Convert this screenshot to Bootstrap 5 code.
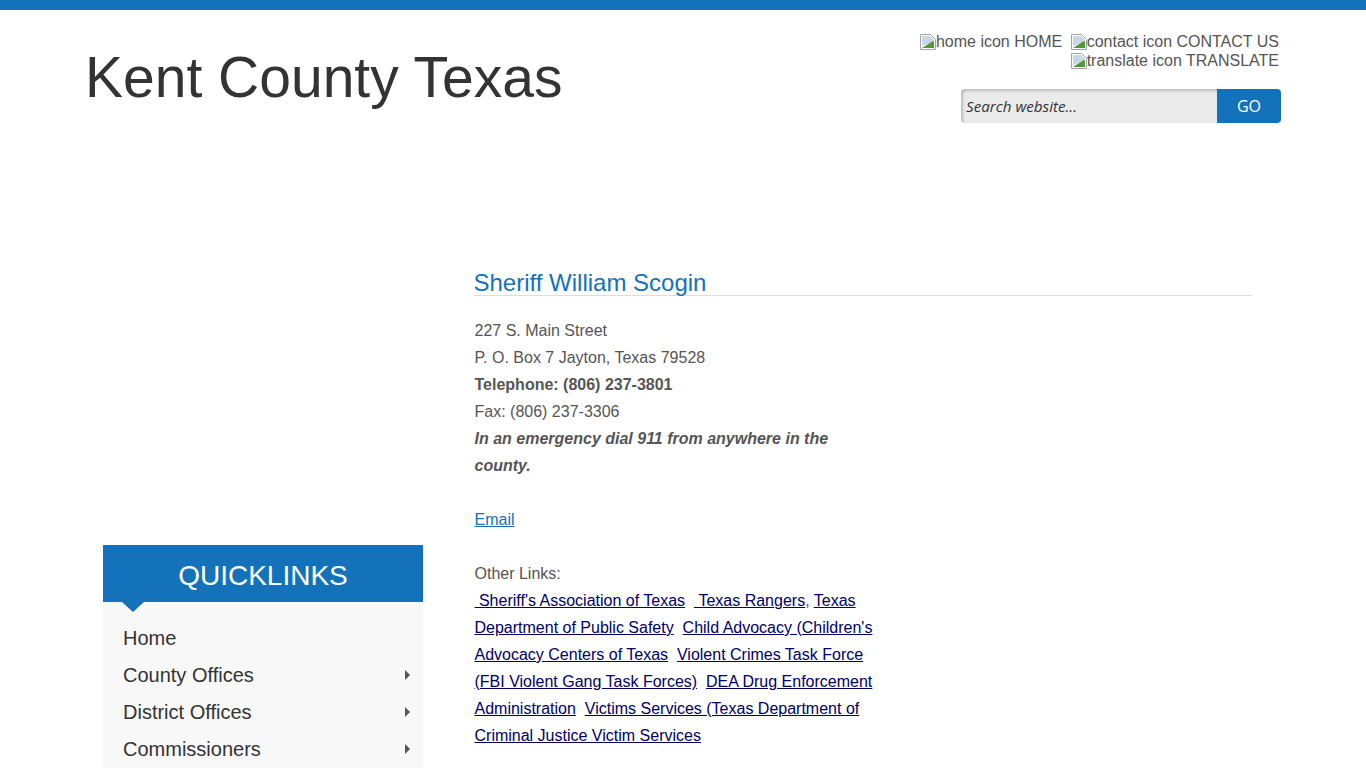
<!DOCTYPE html>
<html lang="en">
  <head>
    <meta charset="UTF-8" />
    <meta name="viewport" content="width=device-width, initial-scale=1.0" />
    <title>Kent County Texas</title>
    <link
      href="https://cdn.jsdelivr.net/npm/bootstrap@5.3.2/dist/css/bootstrap.min.css"
      rel="stylesheet"
    />
    <style>
      body {
        font-family: "Liberation Sans", Arial, sans-serif;
        font-size: 16px;
        color: #555;
        border-top: 10px solid #1472bb;
      }
      .site-head {
        height: 235px;
        padding: 0 85px;
      }
      .site-title {
        font-family: "Liberation Sans", Arial, sans-serif;
        font-size: 57px;
        line-height: 66px;
        font-weight: 400;
        color: #333;
        margin: 34px 0 0;
      }
      .head-right {
        width: 420px;
        padding-top: 22px;
      }
      .top-links {
        line-height: 19px;
        text-align: right;
        padding-right: 2px;
      }
      .top-links a {
        color: #555;
        text-decoration: none;
      }
      .top-links a.next-link {
        margin-left: 4px;
      }
      .broken {
        width: 16px;
        height: 16px;
        vertical-align: -3px;
      }
      .search-box {
        width: 320px;
        height: 34px;
        margin-top: 19px;
        align-self: flex-end;
      }
      .search-box input {
        flex: 1;
        min-width: 0;
        border: 0;
        padding: 0 5px;
        background: #ebebeb;
        box-shadow: inset 2px 2px 3px #bbb;
        border-radius: 4px 0 0 4px;
        font-family: "Open Sans", sans-serif;
        font-style: italic;
        font-size: 15.2px;
        color: #333;
      }
      .search-box input::placeholder {
        color: #333;
        opacity: 1;
      }
      .search-box button {
        width: 64px;
        border: 0;
        background: #1472bb;
        color: #fff;
        border-radius: 0 4px 4px 0;
        font-family: "Open Sans", sans-serif;
        font-size: 16px;
      }
      .page-body {
        padding-left: 103px;
      }
      .side-col {
        width: 320px;
        padding-top: 300px;
      }
      .quick-head {
        height: 57px;
        background: #1472bb;
        color: #fff;
        font-size: 28px;
        line-height: 61px;
        text-align: center;
      }
      .quick-head::after {
        content: "";
        position: absolute;
        left: 19px;
        top: 57px;
        border-style: solid;
        border-width: 10px 11px 0;
        border-color: #1472bb transparent transparent;
      }
      .quick-list {
        background: #f8f8f8;
        padding: 17px 0 2px;
      }
      .quick-list a {
        height: 37px;
        padding: 0 13px 0 20px;
        color: #333;
        font-size: 20px;
        text-decoration: none;
      }
      .quick-list a.sub::after {
        content: "";
        border-style: solid;
        border-width: 5px 0 5px 5px;
        border-color: transparent transparent transparent #555;
      }
      .main-col {
        width: 778.5px;
        margin-left: 50.5px;
        padding-top: 25px;
      }
      .sheriff-name {
        font-family: "Liberation Sans", Arial, sans-serif;
        font-size: 24px;
        line-height: 25px;
        font-weight: 400;
        color: #1472bb;
        border-bottom: 1px solid #ddd;
        margin: 0 0 21px;
      }
      .sheriff-text {
        width: 402px;
        padding-left: 1px;
        line-height: 27px;
      }
      .sheriff-text a {
        color: #1472bb;
      }
      .sheriff-text a.other {
        color: #000066;
      }
    </style>
  </head>
  <body>
    <svg class="d-none">
      <symbol id="broken-img" viewBox="0 0 16 16">
        <path d="M.5.5h10l5 5v10H.5z" fill="#fff" stroke="#a3a3a3" />
        <path d="M2 2h8l4 4v2L2 12z" fill="#c8d6e6" />
        <path d="M2 14l11-7 1 1v6z" fill="#4f9a35" />
      </symbol>
    </svg>
    <header class="site-head d-flex justify-content-between">
      <h1 class="site-title">Kent County Texas</h1>
      <div class="head-right d-flex flex-column">
        <div class="top-links">
          <a href="#"><svg class="broken"><use href="#broken-img" /></svg>home icon HOME</a>
          <a href="#" class="next-link"><svg class="broken"><use href="#broken-img" /></svg>contact icon CONTACT US</a>
          <br />
          <a href="#"><svg class="broken"><use href="#broken-img" /></svg>translate icon TRANSLATE</a>
        </div>
        <form class="search-box d-flex">
          <input type="text" placeholder="Search website..." />
          <button type="button">GO</button>
        </form>
      </div>
    </header>

    <div class="page-body d-flex align-items-start">
      <aside class="side-col">
        <div class="quick-head position-relative">QUICKLINKS</div>
        <nav class="quick-list d-flex flex-column">
          <a href="#" class="d-flex align-items-center justify-content-between">Home</a>
          <a href="#" class="sub d-flex align-items-center justify-content-between">County Offices</a>
          <a href="#" class="sub d-flex align-items-center justify-content-between">District Offices</a>
          <a href="#" class="sub d-flex align-items-center justify-content-between">Commissioners</a>
        </nav>
      </aside>

      <main class="main-col">
        <h2 class="sheriff-name">Sheriff William Scogin</h2>
        <div class="sheriff-text">
          227 S. Main Street<br />
          P. O. Box 7 Jayton, Texas 79528<br />
          <strong>Telephone: (806) 237-3801</strong><br />
          Fax: (806) 237-3306<br />
          <strong><em>In an emergency dial 911 from anywhere in the county.</em></strong><br />
          <br />
          <a href="#">Email</a><br />
          <br />
          Other Links:<br />
          <a href="#" class="other">&nbsp;Sheriff's Association of Texas</a>&nbsp;
          <a href="#" class="other">&nbsp;Texas Rangers</a>,
          <a href="#" class="other">Texas Department of Public Safety</a>&nbsp;
          <a href="#" class="other">Child Advocacy (Children's Advocacy Centers of Texas</a>&nbsp;
          <a href="#" class="other">Violent Crimes Task Force (FBI Violent Gang Task Forces)</a>&nbsp;
          <a href="#" class="other">DEA Drug Enforcement Administration</a>&nbsp;
          <a href="#" class="other">Victims Services (Texas Department of Criminal Justice Victim Services</a>
        </div>
      </main>
    </div>

    <script src="https://cdn.jsdelivr.net/npm/bootstrap@5.3.2/dist/js/bootstrap.bundle.min.js"></script>
  </body>
</html>
